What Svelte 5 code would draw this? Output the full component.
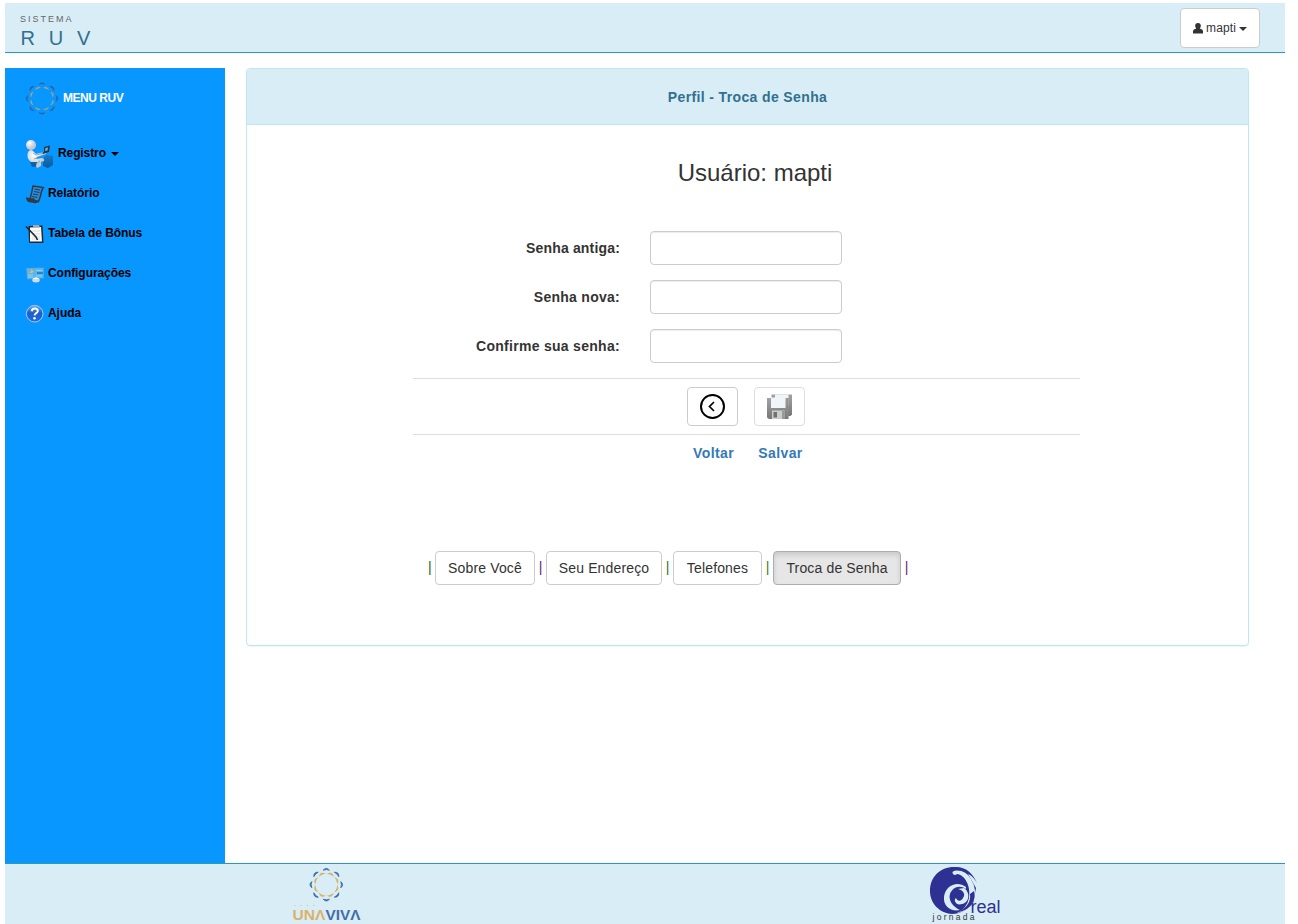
<script>
  const fields = [
    { id: 'old', label: 'Senha antiga:', spacing: 0.17 },
    { id: 'new', label: 'Senha nova:', spacing: 0.27 },
    { id: 'confirm', label: 'Confirme sua senha:', spacing: 0.29 }
  ];
  const tabs = [
    { label: 'Sobre Você', width: 100, tone: '#1f5c2e' },
    { label: 'Seu Endereço', width: 116, tone: '#6b2a6b' },
    { label: 'Telefones', width: 89, tone: '#1d7a2e' },
    { label: 'Troca de Senha', width: 128, tone: '#3f7a1e', active: true }
  ];
  const petals = [0, 45, 90, 135, 180, 225, 270, 315];
</script>

{#snippet ring(outer, inner, weight)}
  {#each petals as angle}
    <path transform="rotate({angle})" d="M-3.1 -14.5Q0 -18.1 3.1 -14.5Q0 -15.8 -3.1 -14.5Z" fill={outer} stroke={outer} stroke-width={weight} />
    <path transform="rotate({angle + 22.5})" d="M-2.6 -11Q0 -13.7 2.6 -11Q0 -11.7 -2.6 -11Z" fill={inner} stroke={inner} stroke-width={weight} />
  {/each}
{/snippet}

<div class="page">
  <header>
    <div class="brand"><small>SISTEMA</small><span>RUV</span></div>
    <button class="user">
      <svg width="10" height="11" viewBox="0 0 10 11"><path fill="#333" d="M5 0C6.900 0 7.900 1.200 7.800 3C7.700 4.400 7.100 5 6.800 5.500Q9.800 6 10 8V10.500H0V8Q.2 6 3.200 5.500C2.900 5 2.300 4.400 2.200 3C2.100 1.200 3.100 0 5 0Z" /></svg>
      <span>mapti</span><i class="caret"></i>
    </button>
  </header>

  <div class="body">
    <nav>
      <a class="title">
        <svg width="34" height="34" viewBox="-17.500 -18 35 35">{@render ring('#315f9b', '#b4a66e', 0.5)}</svg>
        <span>MENU RUV</span>
      </a>
      <a class="item first">
        <svg width="28" height="28" viewBox="0 0 28 28">
          <defs>
            <radialGradient id="skin" cx=".35" cy=".3"><stop offset="0" stop-color="#fff" /><stop offset="1" stop-color="#c4ccd3" /></radialGradient>
            <linearGradient id="chair" x2="0" y2="1"><stop offset="0" stop-color="#167bc7" /><stop offset="1" stop-color="#07599d" /></linearGradient>
          </defs>
          <path fill="url(#chair)" d="M17 19L20 15L27 16L27 25L22 28L17 26ZM4 22L16 21L13 26L6 27Z" />
          <path fill="url(#skin)" d="M2 12Q5 8 8 12L10 14L18 12Q21 11 20 14L11 17L10 19L16 18Q19 19 18 21L15 22L15 26L11 28L10 26L11 22L5 22Q0 18 2 12Z" />
          <path fill="none" stroke="#8593a0" stroke-width=".8" d="M7 13L10 15L18 13M8 19L11 18M11 23L14 21" />
          <circle cx="5" cy="5" r="5" fill="url(#skin)" />
          <path fill="#26394b" d="M18 7L24 5.500L23 12L17 14L16.500 12.500L18 12Z" /><path fill="#65b4ea" d="M19.500 8L22 7.500L21.500 10.500L19 11Z" />
        </svg>
        <span>Registro</span><i class="caret"></i>
      </a>
      <a class="item">
        <svg width="19" height="20" viewBox="0 0 19 20">
          <path fill="#258fdf" stroke="#303a45" stroke-width="1.500" d="M7 2L17.300 3.500Q15.500 6 14.500 12L12.500 17.500L4 15Q6 8 7 2Z" />
          <path d="M8.500 5L14 6M8 7.500L13.500 8.500M7 10L12.500 11M6 12.500L11.500 13.500" fill="none" stroke="#303a45" stroke-width="1.100" />
          <path fill="#303a45" d="M0 13Q4 15 8 14Q9 18 13 17Q11 20 8 19L2 18Q0 16 0 13Z" />
        </svg>
        <span>Relatório</span>
      </a>
      <a class="item">
        <svg width="19" height="20" viewBox="0 0 19 20">
          <path fill="#22282d" d="M2.500 2L16.500 1.500L17.500 19H3Z" /><path fill="#fafafa" d="M4 3.500L15 3L16 17.500H4Z" />
          <path d="M7 1L13 1L14 3.500H7Z" fill="#a2a8ad" />
          <path d="M6 7H14M6 10H14M6 13H14M6 15H14" stroke="#d5d8dc" stroke-width=".8" />
          <path d="M0 2.500L10 13L11.500 16" fill="none" stroke="#252525" stroke-width="1.600" />
        </svg>
        <span>Tabela de Bônus</span>
      </a>
      <a class="item">
        <svg width="19" height="20" viewBox="0 0 19 20">
          <path fill="#55b6f1" stroke="#348ec7" stroke-width=".6" d="M0 4L18 3.500V14.500L1 15.500Z" />
          <path d="M2 11H7M2 13H7M10 6.500H16M10 12H16" stroke="#8fd2fa" /><path d="M11 9H17" stroke="#1677b5" stroke-width="1.500" />
          <path d="M3 9L5 7V5L8 7.500L6 9Z" fill="#ffb43f" /><ellipse cx="10" cy="16" rx="3.800" ry="2.500" fill="#d0dbe1" /><path d="M7 15Q10 12 13 15Z" fill="#fff" />
        </svg>
        <span>Configurações</span>
      </a>
      <a class="item">
        <svg width="19" height="20" viewBox="0 0 19 20">
          <defs><linearGradient id="help" x2="0" y2="1"><stop offset="0" stop-color="#6cabf3" /><stop offset=".45" stop-color="#1c5dcc" /><stop offset="1" stop-color="#1d6de0" /></linearGradient></defs>
          <circle cx="8.700" cy="9.700" r="8.300" fill="url(#help)" stroke="#a9c8ed" />
          <path d="M5.700 7.200Q6.200 4.400 9.100 4.600Q12.400 4.900 11.600 7.600Q11.100 8.800 9.700 9.500Q8.800 10 8.700 11.300" fill="none" stroke="#fff" stroke-width="2" /><circle cx="8.500" cy="14.200" r="1.300" fill="#fff" />
        </svg>
        <span>Ajuda</span>
      </a>
    </nav>

    <main>
      <section class="panel">
        <div class="panel-heading">Perfil - Troca de Senha</div>
        <h1>Usuário: mapti</h1>
        <form>
          {#each fields as field}
            <div class="row"><label for={field.id} style:letter-spacing="{field.spacing}px">{field.label}</label><input id={field.id} type="password" /></div>
          {/each}
        </form>
        <div class="actions">
          <button type="button" aria-label="Voltar">
            <svg width="26" height="26" viewBox="0 0 26 26" fill="none" stroke="#000"><circle cx="12.500" cy="12.500" r="11.500" stroke-width="2" /><path d="M14 8L9.500 12.500L14 17" stroke-width="1.700" /></svg>
          </button>
          <button type="button" class="muted" aria-label="Salvar">
            <svg width="26" height="26" viewBox="0 0 26 26">
              <defs><linearGradient id="disk" x2="0" y2="1"><stop offset="0" stop-color="#a2a2a2" /><stop offset="1" stop-color="#777" /></linearGradient></defs>
              <path fill="url(#disk)" d="M4.500 .5H25V20.500L23.500 22H4.500Z" /><path fill="#edf4fa" d="M8 .5H21.500V12H8Z" />
              <path fill="url(#disk)" d="M0 4H21.500V25H2L0 23.500Z" /><path d="M20.800 4V24.500" stroke="#8a8a8a" stroke-width="1" />
              <path fill="#f0f5fa" d="M4 3.500H18.500V14H4Z" /><path fill="#ccc" d="M5 16.500H17.500V25H5Z" /><path fill="#707070" d="M6.500 18H10V23.500H6.500Z" /><path fill="#999" d="M15 17H17.500V25H15Z" />
            </svg>
          </button>
        </div>
        <div class="captions"><a>Voltar</a><a>Salvar</a></div>
        <div class="tabs">
          {#each tabs as tab}
            <span class="bar" style:color={tab.tone}>|</span>
            <button type="button" class:active={tab.active} style:width="{tab.width}px">{tab.label}</button>
          {/each}
          <span class="bar" style:color="#6b2a6b">|</span>
        </div>
      </section>
    </main>
  </div>

  <footer>
    <svg class="unaviva" width="72" height="60" viewBox="0 0 72 60">
      <g transform="translate(36.300 20.700)">{@render ring('#416fa7', '#d9b36a', 0.9)}</g>
      <g fill="#d9b36a"><circle cx="5" cy="41.500" r=".6" /><circle cx="11" cy="41.500" r=".6" /><circle cx="17.500" cy="41.500" r=".6" /><circle cx="24" cy="41.500" r=".6" /></g>
      <text transform="translate(2.500 56) scale(1 1.150)" textLength="33" lengthAdjust="spacingAndGlyphs" fill="#d9b36a">UNΛ</text>
      <text transform="translate(35.500 56) scale(1 1.150)" textLength="35" lengthAdjust="spacingAndGlyphs" fill="#416fa7">VIVΛ</text>
    </svg>
    <svg class="real" width="74" height="60" viewBox="0 0 74 60">
      <path d="M24 3C35 2 43 9 47 19Q43 12 38 10L46 24L43 40L35 46Q29 50 22 50C9 49 0 39 0 27C0 13 10 3 24 3Z" fill="#2e3192" />
      <path d="M23 10Q21 7 26 6.500Q36 6 41 15Q49 28 42 40Q36 48 27 49Q37 44 39 34C41 22 35 11 27 10Q25 12 23 10Z" fill="#d9edf7" />
      <path d="M36 23C27 16 15 22 14 33C13 42 21 48 30 46C23 43 18 36 20 30C22 24 29 20 36 25Z" fill="#d9edf7" />
      <path d="M34 24C41 29 39 39 32 40C26 42 23 36 26 34C27 37 31 38 33 34C36 30 33 26 28 25Z" fill="#d9edf7" />
      <path d="M44 27C47 37 39 47 28 48C38 43 41 37 40 30Z" fill="#2e3192" />
      <text class="real-name" x="40.500" y="49" textLength="30" lengthAdjust="spacingAndGlyphs">real</text>
      <text class="jornada" x="2.500" y="55.500" textLength="42">jornada</text>
    </svg>
  </footer>
</div>

<style>
  :global(body) { margin: 0; background: #fff; overflow: hidden; }
  .page { box-sizing: border-box; width: 1298px; height: 924px; padding: 3px 13px 0 5px; display: flex; flex-direction: column; font: 14px/20px "Liberation Sans", Arial, sans-serif; color: #333; }
  .page * { box-sizing: border-box; }
  svg { display: block; flex-shrink: 0; overflow: visible; }
  header { height: 50px; flex: none; display: flex; justify-content: space-between; padding: 5px 25px 0 15px; background: #d9edf7; border-bottom: 1px solid #269abc; }
  .brand { display: flex; flex-direction: column; color: #31708f; }
  .brand small { font-size: 9px; line-height: 12px; letter-spacing: 2px; color: #666; margin-top: 5px; }
  .brand span { font-size: 20px; line-height: 22px; letter-spacing: 13.8px; margin: 2px 0 0 .5px; }
  button { font: 14px/20px "Liberation Sans", Arial, sans-serif; color: #333; background: #fff; border: 1px solid #ccc; border-radius: 4px; padding: 0; white-space: nowrap; }
  .user { width: 80px; height: 40px; display: flex; align-items: center; justify-content: center; font-size: 12px; }
  .user span { margin-left: 3px; letter-spacing: .1px; }
  .caret { width: 0; height: 0; border: 4px solid transparent; border-top-color: currentColor; border-bottom: 0; margin: 1px 0 0 3px; }
  .body { flex: none; height: 810px; padding-top: 15px; display: flex; }
  nav { width: 220px; background: #0896ff; padding: 13px 0 0 20px; display: flex; flex-direction: column; font-size: 12px; font-weight: bold; color: #000; }
  nav a { display: flex; align-items: center; }
  .title { color: #fff; height: 34px; letter-spacing: -.48px; } .title span { margin-left: 4px; }
  .item { height: 40px; padding-left: 1px; letter-spacing: -.06px; } .item svg { margin-top: 1px; } .item span { margin: 0 0 0 3px; }
  .first { margin-top: 18px; } .first span { margin: 0 0 0 4px; letter-spacing: -.1px; } .first .caret { margin: 2px 0 0 5px; }
  main { flex: 1; padding: 0 36px 0 21px; }
  .panel { height: 578px; border: 1px solid #bce8f1; border-radius: 4px; box-shadow: 0 1px 1px rgba(0,0,0,.05); background: #fff; overflow: hidden; }
  .panel-heading { height: 56px; background: #d9edf7; border-bottom: 1px solid #bce8f1; color: #31708f; font-weight: bold; text-align: center; line-height: 56px; letter-spacing: .37px; }
  h1 { font-size: 24px; font-weight: normal; line-height: 26px; margin: 35px 0 45px 15px; text-align: center; }
  form { display: flex; flex-direction: column; gap: 15px; }
  .row { display: flex; align-items: center; gap: 30px; }
  label { width: 373px; text-align: right; font-weight: bold; }
  input { width: 192px; height: 34px; border: 1px solid #ccc; border-radius: 4px; box-shadow: inset 0 1px 1px rgba(0,0,0,.075); padding: 6px 12px; }
  .actions { width: 667px; height: 57px; margin: 15px 0 0 166px; border: solid #ddd; border-width: 1px 0; display: flex; gap: 16px; padding: 8px 0 0 274px; }
  .actions button { width: 51px; height: 39px; display: flex; align-items: center; justify-content: center; }
  .actions .muted { border-color: #ddd; }
  .captions { display: flex; gap: 24px; padding: 8px 0 0 446px; font-weight: bold; color: #337ab7; letter-spacing: .42px; }
  .tabs { margin: 88px 0 0 181px; display: flex; align-items: center; }
  .tabs button { height: 34px; letter-spacing: .15px; }
  .tabs .active { background: #e6e6e6; border-color: #adadad; box-shadow: inset 0 3px 5px rgba(0,0,0,.125); }
  .bar { width: 11px; text-align: center; line-height: 30px; margin-top: -2px; }
  .bar:first-child { width: 7px; text-align: left; }
  footer { height: 61px; flex: none; background: #d9edf7; border-top: 1px solid #269abc; display: flex; padding-left: 285px; }
  .unaviva text { font: bold 12.5px "Liberation Sans", Arial, sans-serif; }
  .real { margin-left: 568px; }
  .real-name { font: 18px "Liberation Sans", Arial, sans-serif; fill: #2e3192; }
  .jornada { font: 8.5px "Liberation Sans", Arial, sans-serif; fill: #333; }
</style>
